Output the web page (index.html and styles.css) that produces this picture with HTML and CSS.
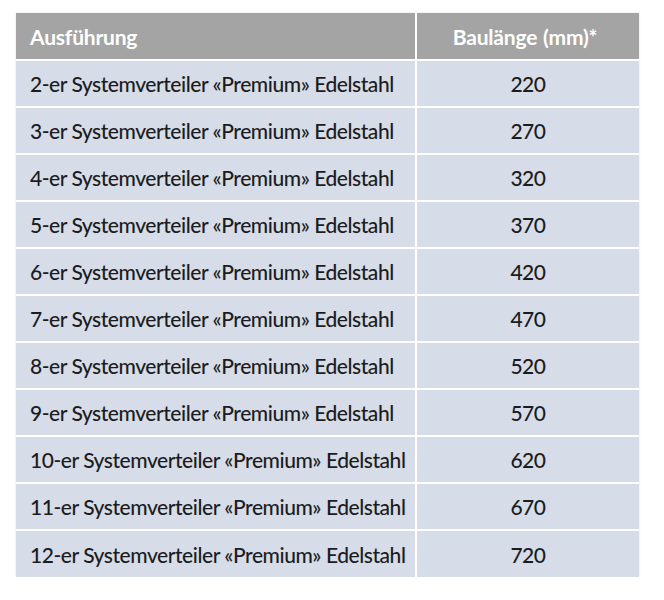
FILE: index.html
```html
<!DOCTYPE html>
<html lang="de">
<head>
<meta charset="utf-8">
<link rel="stylesheet" href="styles.css">
</head>
<body>
<table class="spec">
  <thead>
    <tr><th class="c-name">Ausführung</th><th class="c-len">Baulänge (mm)*</th></tr>
  </thead>
  <tbody>
    <tr><td class="c-name">2-er Systemverteiler «Premium» Edelstahl</td><td class="c-len">220</td></tr>
    <tr><td class="c-name">3-er Systemverteiler «Premium» Edelstahl</td><td class="c-len">270</td></tr>
    <tr><td class="c-name">4-er Systemverteiler «Premium» Edelstahl</td><td class="c-len">320</td></tr>
    <tr><td class="c-name">5-er Systemverteiler «Premium» Edelstahl</td><td class="c-len">370</td></tr>
    <tr><td class="c-name">6-er Systemverteiler «Premium» Edelstahl</td><td class="c-len">420</td></tr>
    <tr><td class="c-name">7-er Systemverteiler «Premium» Edelstahl</td><td class="c-len">470</td></tr>
    <tr><td class="c-name">8-er Systemverteiler «Premium» Edelstahl</td><td class="c-len">520</td></tr>
    <tr><td class="c-name">9-er Systemverteiler «Premium» Edelstahl</td><td class="c-len">570</td></tr>
    <tr><td class="c-name">10-er Systemverteiler «Premium» Edelstahl</td><td class="c-len">620</td></tr>
    <tr><td class="c-name">11-er Systemverteiler «Premium» Edelstahl</td><td class="c-len">670</td></tr>
    <tr><td class="c-name">12-er Systemverteiler «Premium» Edelstahl</td><td class="c-len">720</td></tr>
  </tbody>
</table>
</body>
</html>
```
FILE: styles.css
```css
html, body {
  margin: 0;
  padding: 0;
  background: #ffffff;
}
body {
  padding: 13px 0 0 16px;
  font-family: "Lato", "Open Sans", sans-serif;
}
.spec {
  border-collapse: collapse;
  width: 623px;
  table-layout: fixed;
  box-shadow: 0 0 2px rgba(0,0,0,0.12);
}
.spec th,
.spec td {
  height: 47px;
  padding: 0 0 0 14px;
  box-sizing: border-box;
  border: 2px solid #ffffff;
}
.spec thead tr th { border-top: none; }
.spec tr > :first-child { border-left: none; }
.spec tr > :last-child { border-right: none; }
.spec tbody tr:last-child td { border-bottom: none; }
.spec th {
  background: #a4a4a4;
  color: #ffffff;
  font-weight: 700;
  font-size: 21px;
  letter-spacing: -0.2px;
  text-align: left;
}
.spec td {
  background: #d6dce8;
  color: #1c1c1e;
  font-weight: 500;
  font-size: 21px;
  letter-spacing: -0.45px;
}
.spec .c-name { width: 400px; }
.spec .c-len {
  text-align: center;
  padding: 0;
}
.spec th.c-len { word-spacing: 1px; padding-right: 6px; }
```
